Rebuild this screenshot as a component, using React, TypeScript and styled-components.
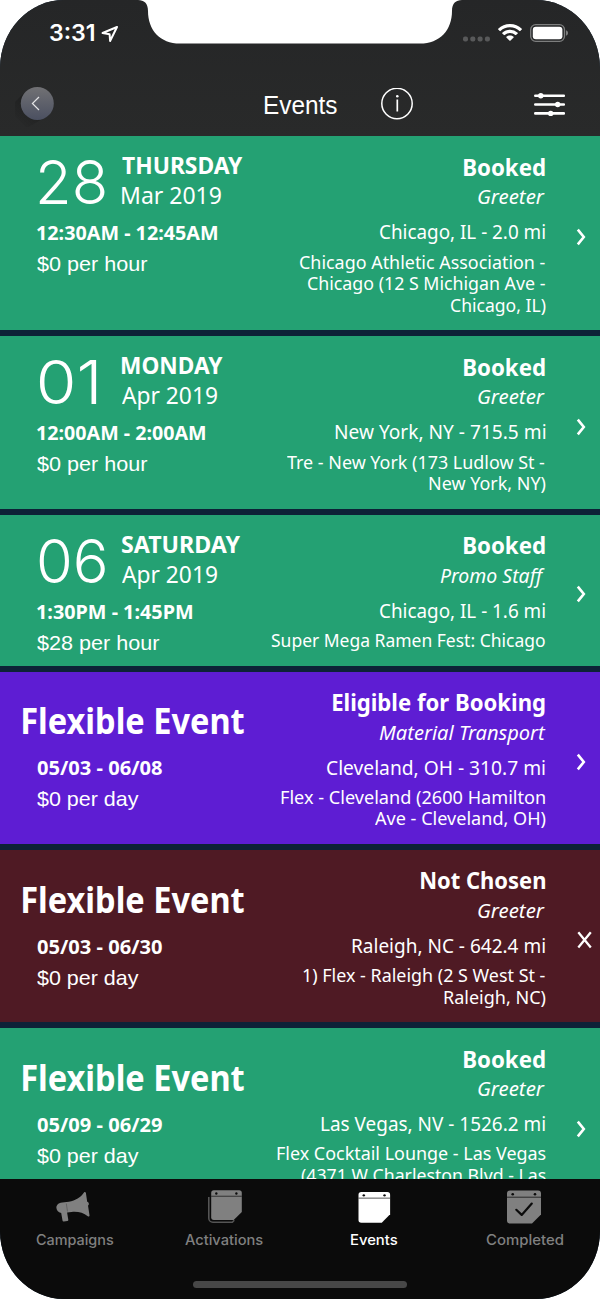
import React, { useLayoutEffect, useRef, useState } from "react";
import styled, { createGlobalStyle } from "styled-components";

const GlobalStyle = createGlobalStyle`
  * { box-sizing: border-box; }
  html, body { margin: 0; padding: 0; background: #fff; }
  body { width: 600px; height: 1299px; overflow: hidden; }
`;

const humanist = `"Noto Sans", "Open Sans", sans-serif`;
const system = `Inter, Roboto, sans-serif`;
const grotesque = `"Liberation Sans", Arial, sans-serif`;

/* ---------- text sized to an exact visible width ---------- */

const FitBox = styled.span<{ $width: number }>`
  display: block;
  width: ${(p) => p.$width}px;
  white-space: nowrap;
`;
const FitInner = styled.span`
  display: inline-block;
  transform-origin: 0 50%;
`;

function Fit({ width, children }: { width: number; children: string }) {
  const ref = useRef<HTMLSpanElement>(null);
  const [transform, setTransform] = useState("none");
  useLayoutEffect(() => {
    const ctx = document.createElement("canvas").getContext("2d");
    if (!ref.current || !ctx) return;
    const cs = getComputedStyle(ref.current);
    ctx.font = `${cs.fontStyle} ${cs.fontWeight} ${cs.fontSize} ${cs.fontFamily}`;
    const m = ctx.measureText(children);
    const left = -m.actualBoundingBoxLeft;
    const scale = width / (m.actualBoundingBoxRight - left);
    setTransform(`translateX(${-left * scale}px) scaleX(${scale})`);
  }, [width, children]);
  return (
    <FitBox $width={width}>
      <FitInner ref={ref} style={{ transform }}>{children}</FitInner>
    </FitBox>
  );
}

/* ---------- frame ---------- */

const Phone = styled.main`
  position: relative;
  display: flex;
  flex-direction: column;
  width: 600px;
  height: 1298.5px;
  overflow: hidden;
  border-radius: 64px / 68px;
  background: #0d2237;
  color: #fff;
`;
const Notch = styled.svg`
  position: absolute;
  top: 0;
  left: 138px;
`;
const Header = styled.header`
  flex: none;
  height: 136.4px;
  background: linear-gradient(#252627, #292a2a);
`;
const StatusBar = styled.div`
  display: flex;
  align-items: center;
  height: 66px;
  padding: 0 31px 0 49.5px;
`;
const Clock = styled.div`
  font: 600 22.6px/28px ${system};
`;
const StatusIcon = styled.svg<{ $left?: string; $top?: string }>`
  display: block;
  flex: none;
  margin-left: ${(p) => p.$left ?? "0"};
  margin-top: ${(p) => p.$top ?? "0"};
`;
const NavBar = styled.div`
  display: flex;
  align-items: center;
  height: 70px;
  padding: 7.5px 34px 0 15px;
`;
const Title = styled.h1`
  margin: 0 0 0 205.5px;
  font: 400 25px/32px ${grotesque};
`;
const NavIcon = styled.svg<{ $left?: string }>`
  display: block;
  flex: none;
  margin-left: ${(p) => p.$left ?? "0"};
`;

/* ---------- event cards ---------- */

const List = styled.section`
  display: flex;
  flex-direction: column;
  gap: 6px;
  flex: 1;
  min-height: 0;
  overflow: hidden;
`;
const Card = styled.article<{ $color: string; $minHeight?: number }>`
  display: flex;
  flex: none;
  min-height: ${(p) => p.$minHeight ?? 0}px;
  background: ${(p) => p.$color};
`;
const When = styled.div`
  width: 230px;
  padding: 13.9px 0 0 37px;
`;
const DateRow = styled.div`
  display: flex;
  height: 64px;
`;
const DayNumber = styled.div`
  flex: none;
  width: 84.5px;
  padding-left: 2.3px;
  font: 350 61px/64px ${system};
`;
const DayName = styled.div`
  font: 700 23px/30px ${humanist};
`;
const MonthYear = styled.div`
  font: 400 23.5px/31px ${humanist};
`;
const FlexibleTitle = styled.div`
  height: 64px;
  margin-left: -14px;
  font: 700 35px/72px ${humanist};
`;
const Hours = styled.div`
  margin-top: 3px;
  font: 700 20.3px/30px ${humanist};
`;
const Pay = styled.div`
  margin-top: 1.9px;
  font: 400 21px/30px ${grotesque};
`;
const Where = styled.div`
  display: flex;
  flex-direction: column;
  align-items: flex-end;
  width: 315.4px;
  padding: 13.4px 0 13.8px;
`;
const Status = styled.div`
  font: 700 24px/33px ${humanist};
`;
const Role = styled.div`
  margin-top: 0.6px;
  font: italic 400 19px/28px ${humanist};
`;
const City = styled.div`
  margin-top: 6px;
  font: 400 19.8px/30px ${humanist};
`;
const Venue = styled.div`
  display: flex;
  flex-direction: column;
  align-items: flex-end;
  margin-top: 4.2px;
  font: 400 18.2px/21.7px ${humanist};
`;
const Action = styled.div<{ $left: number }>`
  display: flex;
  align-items: center;
  padding: 8px 0 0 ${(p) => p.$left}px;
`;

/* ---------- tab bar ---------- */

const TabBar = styled.nav`
  display: flex;
  flex-direction: column;
  align-items: center;
  flex: none;
  height: 120px;
  background: #0b0b0b;
`;
const Tabs = styled.div`
  display: flex;
  width: 600px;
  height: 102px;
`;
const Tab = styled.div<{ $active?: boolean }>`
  display: flex;
  flex-direction: column;
  align-items: center;
  width: 149.8px;
  padding-top: 9px;
  color: ${(p) => (p.$active ? "#fff" : "#808080")};
`;
const TabIcon = styled.svg<{ $shift?: number }>`
  display: block;
  margin-left: ${(p) => p.$shift ?? 0}px;
`;
const TabLabel = styled.div`
  margin-top: 6px;
  font: 500 14.3px/20px ${system};
`;
const HomeIndicator = styled.div`
  width: 214px;
  height: 7px;
  border-radius: 4px;
  background: #474747;
`;

/* ---------- data ---------- */

type Text = [string, number];
interface EventItem {
  color: string;
  day?: { number: Text; name: Text; month: Text };
  hours: Text;
  pay: Text;
  status: Text;
  role: Text;
  city: Text;
  venue: Text[];
  closed?: boolean;
  minHeight?: number;
}

const GREEN = "#24a173";
const PURPLE = "#5e1dd3";
const MAROON = "#4f1a24";

const events: EventItem[] = [
  {
    color: GREEN,
    day: { number: ["28", 66], name: ["THURSDAY", 121], month: ["Mar 2019", 99.5] },
    hours: ["12:30AM - 12:45AM", 180.5],
    pay: ["$0 per hour", 110.5],
    status: ["Booked", 81],
    role: ["Greeter", 67.5],
    city: ["Chicago, IL - 2.0 mi", 165],
    venue: [["Chicago Athletic Association -", 245.5], ["Chicago (12 S Michigan Ave -", 237.5], ["Chicago, IL)", 94.5]],
  },
  {
    color: GREEN,
    day: { number: ["01", 58], name: ["MONDAY", 101], month: ["Apr 2019", 95.5] },
    hours: ["12:00AM - 2:00AM", 168.5],
    pay: ["$0 per hour", 110.5],
    status: ["Booked", 81],
    role: ["Greeter", 67.5],
    city: ["New York, NY - 715.5 mi", 210.5],
    venue: [["Tre - New York (173 Ludlow St -", 258], ["New York, NY)", 116.5]],
  },
  {
    color: GREEN,
    day: { number: ["06", 66], name: ["SATURDAY", 118.5], month: ["Apr 2019", 95.5] },
    hours: ["1:30PM - 1:45PM", 155.5],
    pay: ["$28 per hour", 122.5],
    status: ["Booked", 81],
    role: ["Promo Staff", 105],
    city: ["Chicago, IL - 1.6 mi", 165],
    venue: [["Super Mega Ramen Fest: Chicago", 274.5]],
  },
  {
    color: PURPLE,
    hours: ["05/03 - 06/08", 125],
    pay: ["$0 per day", 102],
    status: ["Eligible for Booking", 212],
    role: ["Material Transport", 166.5],
    city: ["Cleveland, OH - 310.7 mi", 218],
    venue: [["Flex - Cleveland (2600 Hamilton", 264], ["Ave - Cleveland, OH)", 170.5]],
  },
  {
    color: MAROON,
    hours: ["05/03 - 06/30", 125],
    pay: ["$0 per day", 102],
    status: ["Not Chosen", 124],
    role: ["Greeter", 67.5],
    city: ["Raleigh, NC - 642.4 mi", 193],
    venue: [["1) Flex - Raleigh (2 S West St -", 242.5], ["Raleigh, NC)", 101.5]],
    closed: true,
  },
  {
    color: GREEN,
    hours: ["05/09 - 06/29", 125],
    pay: ["$0 per day", 102],
    status: ["Booked", 81],
    role: ["Greeter", 67.5],
    city: ["Las Vegas, NV - 1526.2 mi", 224],
    venue: [["Flex Cocktail Lounge - Las Vegas", 268.5], ["(4371 W Charleston Blvd - Las", 244.5]],
    minHeight: 194,
  },
];

const fit = ([text, width]: Text) => <Fit width={width}>{text}</Fit>;

function EventCard({ item }: { item: EventItem }) {
  return (
    <Card $color={item.color} $minHeight={item.minHeight}>
      <When>
        {item.day ? (
          <DateRow>
            <DayNumber>{fit(item.day.number)}</DayNumber>
            <div>
              <DayName>{fit(item.day.name)}</DayName>
              <MonthYear>{fit(item.day.month)}</MonthYear>
            </div>
          </DateRow>
        ) : (
          <FlexibleTitle>{fit(["Flexible Event", 221.5])}</FlexibleTitle>
        )}
        <Hours>{fit(item.hours)}</Hours>
        <Pay>{fit(item.pay)}</Pay>
      </When>
      <Where>
        <Status>{fit(item.status)}</Status>
        <Role>{fit(item.role)}</Role>
        <City>{fit(item.city)}</City>
        <Venue>
          {item.venue.map((line) => (
            <Fit key={line[0]} width={line[1]}>{line[0]}</Fit>
          ))}
        </Venue>
      </Where>
      <Action $left={item.closed ? 31.6 : 30.6}>
        {item.closed ? (
          <svg width="16" height="18" viewBox="0 0 16 18" fill="none" stroke="#fff" strokeWidth="2.3">
            <path d="M1.3 1.2 13.8 16.4M13.8 1.2 1.3 16.4" />
          </svg>
        ) : (
          <svg width="12" height="18" viewBox="0 0 12 18" fill="none" stroke="#fff" strokeWidth="2.6">
            <path d="M1.8 1.6 7.8 9 1.8 16.4" />
          </svg>
        )}
      </Action>
    </Card>
  );
}

const glyphPlacement = {
  stack: "translate(4.2 2.3) scale(.9)",
  plain: "translate(2.5 4) scale(.93)",
  check: "translate(1 2.6)",
};

function CalendarGlyph({ kind }: { kind: "stack" | "plain" | "check" }) {
  return (
    <TabIcon width="36" height="36" viewBox="0 0 36 36">
      {kind === "stack" && (
        <path d="M1.8 9v21.2a4 4 0 0 0 4 4h19.500l2-2" fill="none" stroke="#555" strokeWidth="1.6" />
      )}
      <g transform={glyphPlacement[kind]}>
        <path d="M3 0h28a3 3 0 0 1 3 3v21l-9 9H3a3 3 0 0 1-3-3V3a3 3 0 0 1 3-3z" fill="currentColor" />
        <path d="M0 6.6h34" stroke="#0b0b0b" strokeOpacity=".75" strokeWidth="1" />
        <circle cx="5.7" cy="3.6" r="1.3" fill="#0b0b0b" />
        <circle cx="28" cy="3.6" r="1.3" fill="#0b0b0b" />
        {kind === "check" && (
          <path d="m9.3 19.2 5.4 5.1L24.8 13" fill="none" stroke="#0b0b0b" strokeWidth="2.2" strokeLinecap="round" strokeLinejoin="round" />
        )}
      </g>
    </TabIcon>
  );
}

export default function App() {
  return (
    <>
      <GlobalStyle />
      <Phone>
        <Header>
          <StatusBar>
            <Clock><Fit width={44}>3:31</Fit></Clock>
            <StatusIcon $left="7px" $top="1px" width="18" height="18" viewBox="0 0 18 18" fill="none" stroke="#fff" strokeWidth="2" strokeLinejoin="round">
              <path d="M16 2 1.6 8l7 1.2.5 6.8z" />
            </StatusIcon>
            <StatusIcon $left="auto" $top="12px" width="28" height="6" viewBox="0 0 28 6" fill="#58595a">
              <rect x="0" y=".5" width="5" height="5" rx="2" />
              <rect x="7.3" y=".5" width="5" height="5" rx="2" />
              <rect x="14.6" y=".5" width="5" height="5" rx="2" />
              <rect x="21.9" y=".5" width="5" height="5" rx="2" />
            </StatusIcon>
            <StatusIcon $left="7px" width="24" height="18" viewBox="0 0 24 18" fill="#fff">
              <path d="M12 0C7.4 0 3.2 1.8.2 4.7a.5.5 0 0 0 0 .7l1.6 1.6c.2.2.5.2.7 0A13.6 13.6 0 0 1 12 3.3c3.7 0 7 1.4 9.5 3.7.2.2.5.2.7 0l1.6-1.6a.5.5 0 0 0 0-.7C20.8 1.8 16.6 0 12 0z" />
              <path d="M12 5.8c-3 0-5.7 1.1-7.7 3a.5.5 0 0 0 0 .7l1.7 1.6c.2.2.5.2.7 0a7.8 7.8 0 0 1 10.6 0c.2.2.5.2.7 0l1.7-1.6a.5.5 0 0 0 0-.7 11.2 11.2 0 0 0-7.700-3z" />
              <path d="M12 11.4c-1.4 0-2.7.5-3.6 1.4a.5.5 0 0 0 0 .7l3.2 3.2c.2.2.5.2.7 0l3.3-3.2a.5.5 0 0 0 0-.7c-1-.9-2.2-1.4-3.6-1.4z" />
            </StatusIcon>
            <StatusIcon $left="8px" width="39" height="18" viewBox="0 0 39 18">
              <rect x=".7" y=".7" width="33.8" height="16.6" rx="5" fill="none" stroke="#7d7e7e" strokeWidth="1.3" />
              <rect x="2.8" y="2.8" width="29.6" height="12.4" rx="3" fill="#fff" />
              <path d="M36 6.2c1.2.4 2 1.5 2 2.8s-.8 2.4-2 2.8z" fill="#7d7e7e" />
            </StatusIcon>
          </StatusBar>
          <NavBar>
            <NavIcon width="44" height="44" viewBox="0 0 44 44">
              <defs>
                <linearGradient id="knob" x1="0" y1="0" x2="0" y2="1">
                  <stop offset="0" stopColor="#717174" />
                  <stop offset="1" stopColor="#4b5061" />
                </linearGradient>
                <linearGradient id="cast" x1="1" y1="0" x2="0" y2="1">
                  <stop offset=".4" stopColor="#000" stopOpacity=".2" />
                  <stop offset=".85" stopColor="#000" stopOpacity="0" />
                </linearGradient>
              </defs>
              <path d="M9 10-7 26 12 45 34 32z" fill="url(#cast)" />
              <circle cx="22.3" cy="20.4" r="16.5" fill="url(#knob)" />
              <path d="m24 14-6.6 6.5 6.6 6.5" fill="none" stroke="#e4e4e6" strokeWidth="1.2" />
            </NavIcon>
            <Title><Fit width={72}>Events</Fit></Title>
            <NavIcon $left="43.5px" width="34" height="34" viewBox="0 0 34 34">
              <circle cx="17" cy="15.5" r="15.2" fill="none" stroke="#fff" strokeWidth="1.5" />
              <path d="M17.3 11.5v12" stroke="#fff" strokeWidth="1.7" />
              <circle cx="17.3" cy="8.3" r="1.3" fill="#fff" />
            </NavIcon>
            <NavIcon $left="auto" width="32" height="24" viewBox="0 0 32 24" stroke="#fff" strokeWidth="2.6" strokeLinecap="round">
              <path d="M1.3 2.7h28.5M1.3 11.5h28.5M1.3 20.4h28.5" />
              <g fill="#fff" stroke="none">
                <circle cx="6.8" cy="2.7" r="2.7" />
                <circle cx="23.7" cy="11.5" r="2.7" />
                <circle cx="16.7" cy="20.4" r="2.7" />
              </g>
            </NavIcon>
          </NavBar>
        </Header>

        <List>
          {events.map((item, i) => (
            <EventCard key={i} item={item} />
          ))}
        </List>

        <TabBar>
          <Tabs>
            <Tab>
              <TabIcon $shift={-3} width="36" height="36" viewBox="0 0 36 36" fill="currentColor">
                <path d="M29 4.5c.6-.8 1.7-.6 1.9.4l1.3 8.8c1.7.3 2.3 2.9.8 3.8l1.5 9.8c.1 1-.9 1.5-1.7.9-4.6-3.6-10-5-16.3-4.3l-4.4.5 1.2 7.3c.1.7-.3 1.2-1 1.3l-3.5.5c-.7.1-1.2-.3-1.3-1L6.2 25c-5.3-.8-6.7-7.6-1.9-9.8.9-.4 1.7-.5 3-.7l6.5-.8C20.7 12.6 25.6 9.5 29 4.5z" />
                <path d="m11.3 15.5 1.2 8" stroke="#5c5c5c" strokeWidth=".8" />
              </TabIcon>
              <TabLabel><Fit width={78}>Campaigns</Fit></TabLabel>
            </Tab>
            <Tab>
              <CalendarGlyph kind="stack" />
              <TabLabel><Fit width={78.5}>Activations</Fit></TabLabel>
            </Tab>
            <Tab $active>
              <CalendarGlyph kind="plain" />
              <TabLabel><Fit width={47}>Events</Fit></TabLabel>
            </Tab>
            <Tab>
              <CalendarGlyph kind="check" />
              <TabLabel><Fit width={77}>Completed</Fit></TabLabel>
            </Tab>
          </Tabs>
          <HomeIndicator />
        </TabBar>
        <Notch width="324" height="44" viewBox="0 0 324 44" fill="#fff">
          <path d="M0 0C6 .3 10 3 10 11c0 19 12 32.6 32 32.6H282c20 0 32-13.6 32-32.6 0-8 4-10.7 10-11z" />
        </Notch>
      </Phone>
    </>
  );
}
